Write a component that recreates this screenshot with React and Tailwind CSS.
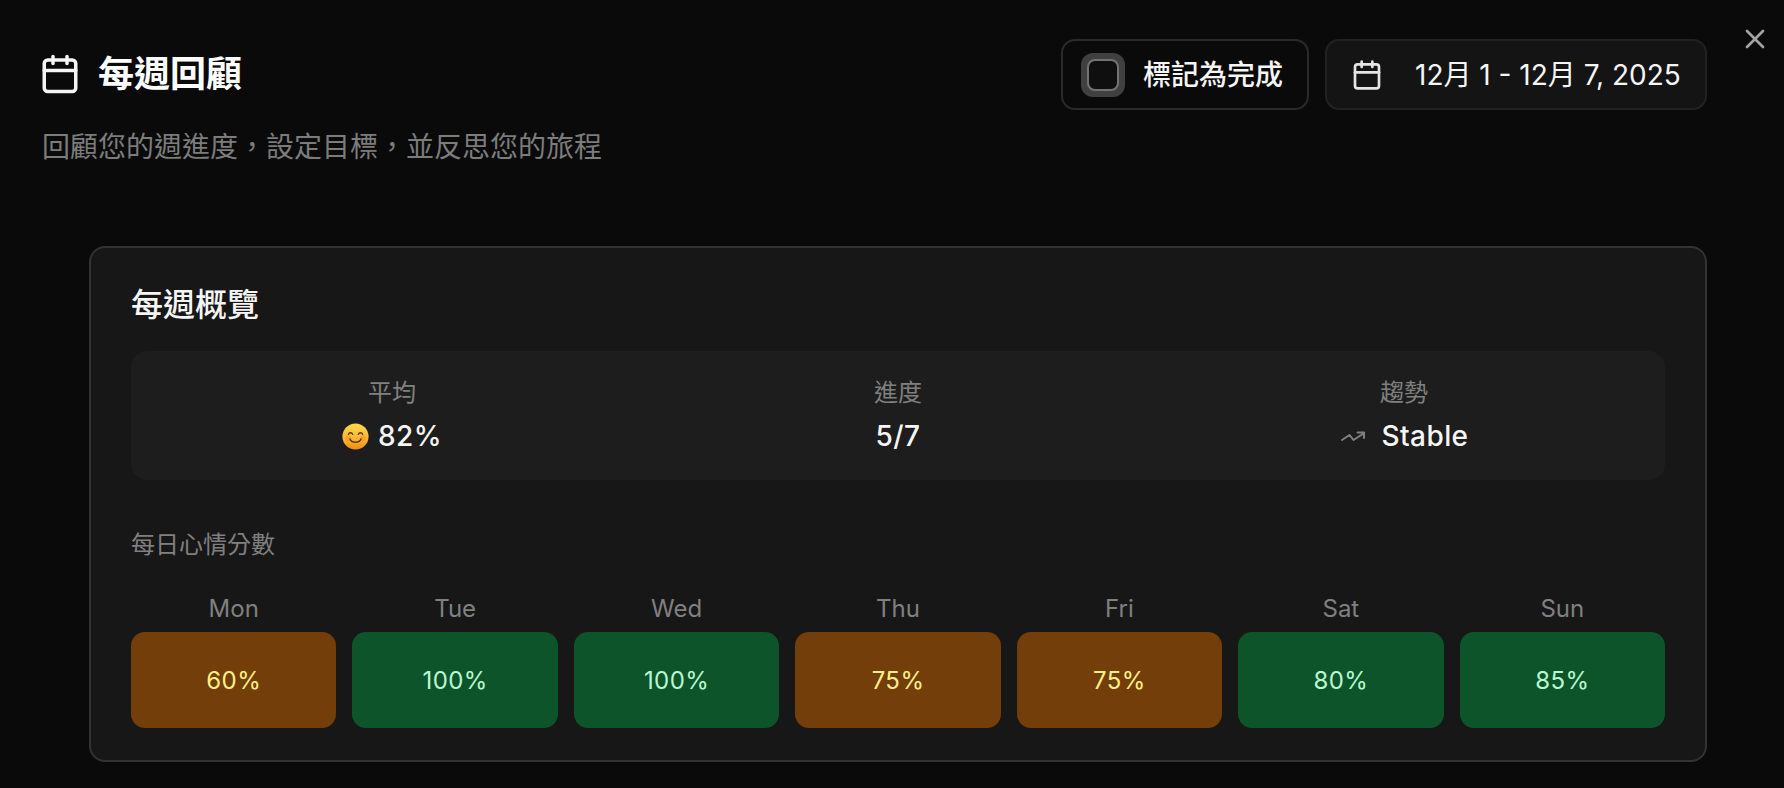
import { Calendar, X } from "lucide-react";

const days = [
  { name: "Mon", score: 60 },
  { name: "Tue", score: 100 },
  { name: "Wed", score: 100 },
  { name: "Thu", score: 75 },
  { name: "Fri", score: 75 },
  { name: "Sat", score: 80 },
  { name: "Sun", score: 85 },
];

function Smiley() {
  return (
    <svg width="27" height="27" viewBox="0 0 32 32">
      <defs>
        <linearGradient id="face" x1="0" y1="0" x2="0" y2="1">
          <stop offset="0" stopColor="#ffd84d" />
          <stop offset="0.6" stopColor="#fdb52e" />
          <stop offset="1" stopColor="#f08a10" />
        </linearGradient>
      </defs>
      <circle cx="16" cy="16" r="15.5" fill="url(#face)" />
      <circle cx="7.5" cy="18" r="3.5" fill="#f7853a" opacity="0.45" />
      <circle cx="24.5" cy="18" r="3.5" fill="#f7853a" opacity="0.45" />
      <path d="M7.500 13.500c1-2.600 4.200-2.600 5.200 0M19.300 13.500c1-2.600 4.200-2.600 5.200 0" fill="none" stroke="#5c3310" strokeWidth="1.6" strokeLinecap="round" />
      <path d="M9.500 19c1.500 5 11.500 5 13 0" fill="none" stroke="#5c3310" strokeWidth="1.7" strokeLinecap="round" />
    </svg>
  );
}

// the trend arrow in the picture is flatter than lucide's trending-up
function TrendIcon() {
  return (
    <svg width="26" height="14" viewBox="0 0 26 14" fill="none" stroke="#808080" strokeWidth="2" strokeLinecap="round" strokeLinejoin="round">
      <path d="M2 11 L9.500 6 L13.500 11 L23.500 4.500" />
      <path d="M17.500 3.500 L24 3.500 L24 9" />
    </svg>
  );
}

function Stat({ label, children }) {
  return (
    <div className="flex flex-col items-center pt-[2px]">
      <div className="text-[24px] leading-[32px] text-[#808080]">{label}</div>
      <div className="mt-[7px] flex items-center gap-[9px] text-[28px] leading-[40px] font-medium tracking-[0.4px] text-[#f5f5f5]">
        {children}
      </div>
    </div>
  );
}

export default function App() {
  return (
    <div className="relative min-h-[788px] w-full overflow-hidden bg-[#0a0a0a] pt-[39px] pr-[77px] pl-[42px] font-['Inter','Noto_Sans_CJK_TC',sans-serif] text-white">
      <button className="absolute top-[23px] right-[13px] text-[#a3a3a3]">
        <X size={32} strokeWidth={2} />
      </button>

      <div className="flex items-start justify-between">
        <div>
          <div className="mt-[10px] flex h-[50px] items-center gap-[17px]">
            <Calendar size={42} strokeWidth={2} className="-ml-[3px] text-[#f5f5f5]" />
            <h1 className="text-[36px] leading-[50px] font-semibold">每週回顧</h1>
          </div>
          <p className="mt-[28px] text-[28px] leading-[40px] text-[#7c7c7c]">
            回顧您的週進度，設定目標，並反思您的旅程
          </p>
        </div>

        <div className="flex items-center gap-[16px]">
          <div className="flex h-[71px] w-[248px] items-center gap-[18px] rounded-[14px] border-2 border-[#2a2a2a] bg-[#0a0a0a] pl-[18px]">
            <span className="flex h-[44px] w-[44px] items-center justify-center rounded-[12px] bg-[#404040]">
              <span className="h-[32px] w-[32px] rounded-[8px] border-2 border-[#737373] bg-[#0f0f0f]" />
            </span>
            <span className="text-[28px] leading-[40px] font-medium text-[#f5f5f5]">標記為完成</span>
          </div>
          <div className="flex h-[71px] w-[382px] items-center gap-[32px] rounded-[14px] border-2 border-[#222222] bg-[#141414] pl-[24px]">
            <Calendar size={32} strokeWidth={2} className="text-[#e5e5e5]" />
            <span className="text-[28px] leading-[40px] text-[#f5f5f5]">12月 1 - 12月 7, 2025</span>
          </div>
        </div>
      </div>

      <div className="mt-[79px] ml-[47px] rounded-[16px] border-2 border-[#333333] bg-[#171717] px-[40px] pt-[35px] pb-[32px]">
        <h2 className="text-[32px] leading-[44px] font-medium text-[#f5f5f5]">每週概覽</h2>

        <div className="mt-[24px] grid h-[129px] grid-cols-3 items-center gap-[16px] rounded-[16px] bg-[#1d1d1d] px-[16px]">
          <Stat label="平均">
            <Smiley />
            <span>82%</span>
          </Stat>
          <Stat label="進度">
            <span>5/7</span>
          </Stat>
          <Stat label="趨勢">
            <span className="mr-[7px] flex">
              <TrendIcon />
            </span>
            <span>Stable</span>
          </Stat>
        </div>

        <div className="mt-[49px] text-[24px] leading-[32px] text-[#808080]">每日心情分數</div>

        <div className="mt-[32px] grid grid-cols-7 gap-[16px]">
          {days.map((day) => (
            <div key={day.name} className="flex flex-col items-center">
              <div className="text-[24px] leading-[32px] text-[#808080]">{day.name}</div>
              <div
                className={
                  day.score >= 80
                    ? "mt-[7px] flex h-[96px] w-full items-center justify-center rounded-[14px] bg-green-900 pt-[2px] text-[24px] tracking-[0.4px] text-green-200"
                    : "mt-[7px] flex h-[96px] w-full items-center justify-center rounded-[14px] bg-yellow-900 pt-[2px] text-[24px] tracking-[0.4px] text-yellow-200"
                }
              >
                {day.score}%
              </div>
            </div>
          ))}
        </div>
      </div>
    </div>
  );
}
